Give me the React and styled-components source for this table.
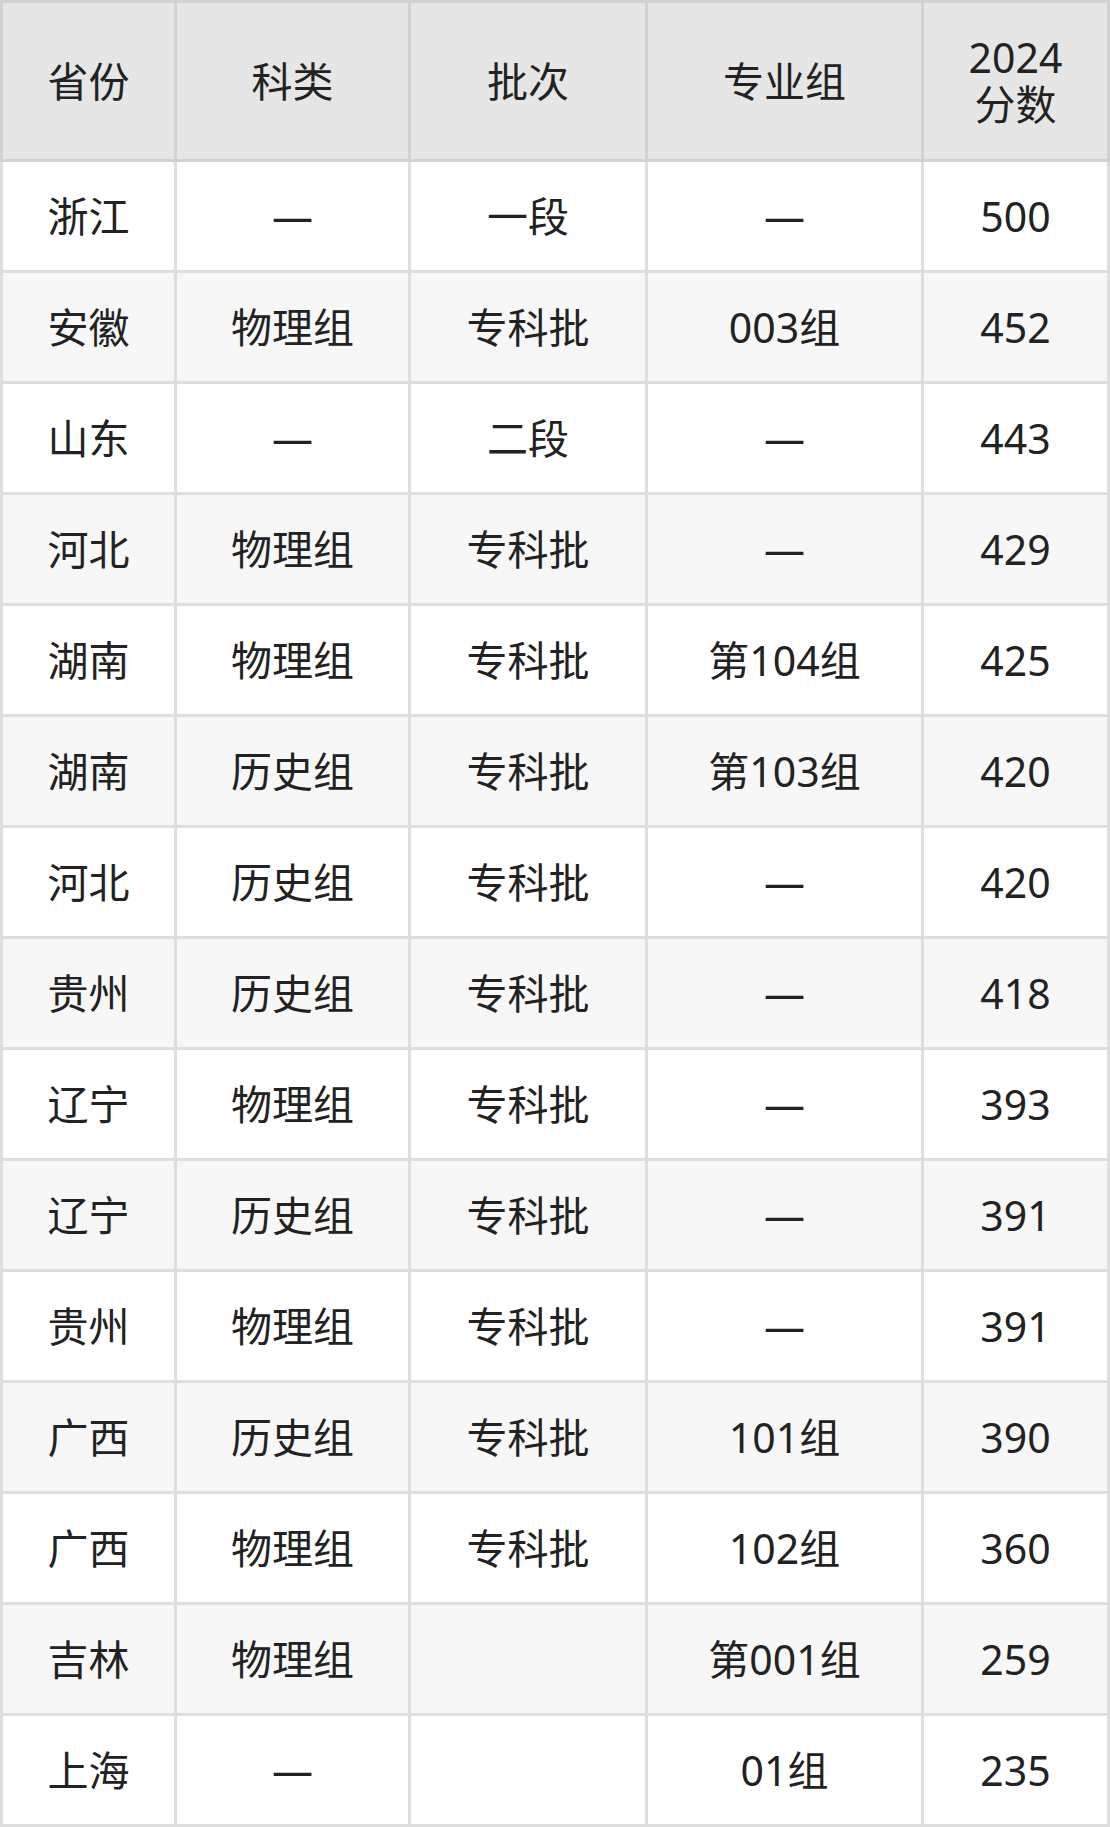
import React from "react";
import styled, { createGlobalStyle } from "styled-components";

const GlobalStyle = createGlobalStyle`
  html, body {
    margin: 0;
    padding: 0;
    background: #ffffff;
  }
  body {
    font-family: "Noto Sans", "Noto Sans CJK SC", sans-serif;
    color: #222222;
  }
`;

const COLS = "171px 231px 234px 273px 183px";

const Page = styled.div`
  width: 1110px;
  display: flex;
  flex-direction: column;
`;

const HeadGrid = styled.div`
  display: grid;
  grid-template-columns: ${COLS};
  gap: 3px;
  padding: 3px;
  background: #d2d2d2;
`;

const HeadCell = styled.div`
  height: 156px;
  background: #e6e6e6;
  display: flex;
  align-items: center;
  justify-content: center;
  text-align: center;
  font-size: 41px;
  line-height: 47px;
  color: #222222;
`;

const BodyGrid = styled.div`
  display: grid;
  grid-template-columns: ${COLS};
  gap: 3px;
  padding: 0 3px 3px;
  background: #dedede;
`;

const Cell = styled.div`
  height: 108px;
  background: ${(p) => (p.$alt ? "#f7f7f7" : "#ffffff")};
  display: flex;
  align-items: center;
  justify-content: center;
  font-size: 41px;
  line-height: 1;
  color: #222222;
  white-space: nowrap;
`;

const D = "—";

const rows = [
  ["浙江", D, "一段", D, "500"],
  ["安徽", "物理组", "专科批", "003组", "452"],
  ["山东", D, "二段", D, "443"],
  ["河北", "物理组", "专科批", D, "429"],
  ["湖南", "物理组", "专科批", "第104组", "425"],
  ["湖南", "历史组", "专科批", "第103组", "420"],
  ["河北", "历史组", "专科批", D, "420"],
  ["贵州", "历史组", "专科批", D, "418"],
  ["辽宁", "物理组", "专科批", D, "393"],
  ["辽宁", "历史组", "专科批", D, "391"],
  ["贵州", "物理组", "专科批", D, "391"],
  ["广西", "历史组", "专科批", "101组", "390"],
  ["广西", "物理组", "专科批", "102组", "360"],
  ["吉林", "物理组", "", "第001组", "259"],
  ["上海", D, "", "01组", "235"],
];

export default function App() {
  return (
    <Page>
      <GlobalStyle />
      <HeadGrid>
        <HeadCell>省份</HeadCell>
        <HeadCell>科类</HeadCell>
        <HeadCell>批次</HeadCell>
        <HeadCell>专业组</HeadCell>
        <HeadCell>
          2024
          <br />
          分数
        </HeadCell>
      </HeadGrid>
      <BodyGrid>
        {rows.map((r, i) =>
          r.map((c, j) => (
            <Cell key={`${i}-${j}`} $alt={i % 2 === 1}>
              {c}
            </Cell>
          ))
        )}
      </BodyGrid>
    </Page>
  );
}
